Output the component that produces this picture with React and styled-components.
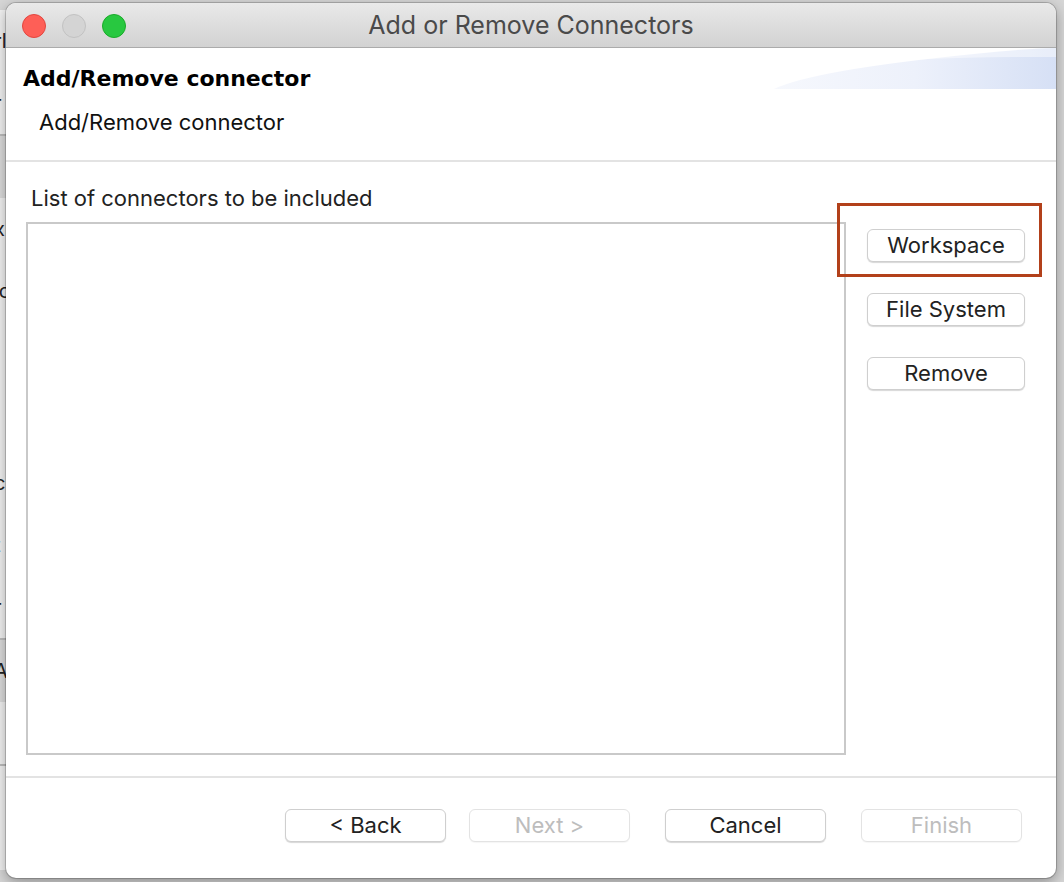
import styled, { createGlobalStyle } from "styled-components";

const GlobalStyle = createGlobalStyle`
  html, body {
    margin: 0;
    padding: 0;
    background: #d9d9d9;
  }
  body {
    font-family: Inter, "Liberation Sans", Arial, sans-serif;
    overflow: hidden;
  }
`;

function TrafficLights() {
  return (
    <Lights>
      <Light color="#fe5f57" border="#e2463f" />
      <Light color="#d4d4d4" border="#c2c2c2" />
      <Light color="#28c840" border="#1aab29" />
    </Lights>
  );
}

function Banner() {
  return (
    <BannerArt width="282" height="41" viewBox="0 0 282 41">
      <defs>
        <linearGradient id="bannerFill" x1="0" y1="0" x2="1" y2="0">
          <stop offset="0" stopColor="#f6f8fd" />
          <stop offset="0.5" stopColor="#edf1fb" />
          <stop offset="1" stopColor="#d6e0f5" />
        </linearGradient>
      </defs>
      <path d="M0 41 Q 40 22 200 6 Q 245 1 282 0 L 282 41 Z" fill="url(#bannerFill)" />
      <path d="M60 18 Q 150 8 282 9 L 282 0 Q 150 2 60 18 Z" fill="#ffffff" opacity="0.45" />
    </BannerArt>
  );
}

function App() {
  return (
    <>
      <GlobalStyle />
      <Desktop>
        <BackWindow>
          <BackRow>rl</BackRow>
          <BackRow line>r</BackRow>
          <BackRow shaded />
          <BackRow>xl</BackRow>
          <BackRow>ic</BackRow>
          <BackRow tall />
          <BackRow>c</BackRow>
          <BackRow>t</BackRow>
          <BackRow line>r</BackRow>
          <BackRow shaded>A</BackRow>
          <BackRow line />
          <BackRow />
        </BackWindow>

        <Dialog>
          <TitleBar>
            <TrafficLights />
            <WindowTitle>Add or Remove Connectors</WindowTitle>
          </TitleBar>

          <Header>
            <Banner />
            <HeaderTitle>Add/Remove connector</HeaderTitle>
            <HeaderDesc>Add/Remove connector</HeaderDesc>
          </Header>

          <Body>
            <ListColumn>
              <Label>List of connectors to be included</Label>
              <ListBox />
            </ListColumn>
            <SideButtons>
              <Highlight>
                <PushButton>Workspace</PushButton>
              </Highlight>
              <PushButton>File System</PushButton>
              <PushButton>Remove</PushButton>
            </SideButtons>
          </Body>

          <Footer>
            <PushButton wide>&lt; Back</PushButton>
            <PushButton wide disabled>Next &gt;</PushButton>
            <PushButton wide spaced>Cancel</PushButton>
            <PushButton wide spaced disabled>Finish</PushButton>
          </Footer>
        </Dialog>
      </Desktop>
    </>
  );
}

const Desktop = styled.div`
  position: relative;
  width: 1064px;
  height: 882px;
  overflow: hidden;
  background: #d6d6d6;
`;

const BackWindow = styled.div`
  position: absolute;
  left: 0;
  top: 10px;
  width: 40px;
  height: 860px;
  background: #f2f2f2;
  display: flex;
  flex-direction: column;
  font-size: 20px;
  color: #222;
`;

const BackRow = styled.div`
  height: ${(p) => (p.tall ? 130 : 62)}px;
  line-height: 62px;
  margin-left: -6px;
  border-bottom: ${(p) => (p.line ? "2px solid #bdbdbd" : "none")};
  background: ${(p) => (p.shaded ? "#dcdcdc" : "transparent")};
  white-space: nowrap;
`;

const Dialog = styled.div`
  position: absolute;
  left: 6px;
  top: 3px;
  width: 1050px;
  height: 875px;
  background: #fff;
  border-radius: 10px;
  overflow: hidden;
  box-shadow: 0 0 0 1px rgba(0, 0, 0, 0.18), 0 4px 14px rgba(0, 0, 0, 0.35);
  display: flex;
  flex-direction: column;
`;

const TitleBar = styled.div`
  position: relative;
  height: 44px;
  flex: 0 0 44px;
  background: linear-gradient(#e9e9e9, #d2d2d2);
  border-bottom: 1px solid #ababab;
  display: flex;
  align-items: center;
  justify-content: center;
`;

const Lights = styled.div`
  position: absolute;
  left: 16px;
  top: 11px;
  display: flex;
  gap: 16px;
`;

const Light = styled.span`
  width: 24px;
  height: 24px;
  border-radius: 50%;
  box-sizing: border-box;
  background: ${(p) => p.color};
  border: 1px solid ${(p) => p.border};
`;

const WindowTitle = styled.div`
  font-size: 25px;
  color: #4a4a4a;
`;

const Header = styled.div`
  position: relative;
  height: 114px;
  flex: 0 0 114px;
  border-bottom: 2px solid #e3e3e3;
  padding: 18px 0 0 17px;
  box-sizing: border-box;
`;

const BannerArt = styled.svg`
  position: absolute;
  right: 0;
  top: 0;
  display: block;
`;

const HeaderTitle = styled.div`
  position: relative;
  font-family: "DejaVu Sans", Verdana, sans-serif;
  font-weight: bold;
  font-size: 22px;
  line-height: 26px;
  color: #000;
`;

const HeaderDesc = styled.div`
  position: relative;
  margin: 17px 0 0 16px;
  font-size: 22px;
  line-height: 26px;
  color: #111;
`;

const Body = styled.div`
  flex: 1;
  display: flex;
  padding: 0 0 0 20px;
  border-bottom: 2px solid #e3e3e3;
`;

const ListColumn = styled.div`
  display: flex;
  flex-direction: column;
  width: 820px;
`;

const Label = styled.div`
  margin: 24px 0 0 5px;
  height: 24px;
  line-height: 24px;
  font-size: 22px;
  color: #222;
`;

const ListBox = styled.div`
  margin-top: 12px;
  height: 533px;
  box-sizing: border-box;
  border: 2px solid #c9c9c9;
  background: #fff;
`;

const SideButtons = styled.div`
  display: flex;
  flex-direction: column;
  gap: 31px;
  padding-top: 67px;
  margin-left: 21px;
`;

const Highlight = styled.div`
  width: 205px;
  height: 74px;
  box-sizing: border-box;
  border: 3px solid #b2401a;
  margin: -26px 0 -15px -30px;
  padding: 23px 0 0 27px;
`;

const PushButton = styled.button`
  width: ${(p) => (p.wide ? 161 : 158)}px;
  height: 33px;
  box-sizing: border-box;
  border: 1px solid ${(p) => (p.disabled ? "#e3e3e3" : "#cfcfcf")};
  border-radius: 6px;
  background: #fff;
  box-shadow: ${(p) => (p.disabled ? "0 1px 1px rgba(0,0,0,0.04)" : "0 1px 1px rgba(0,0,0,0.16)")};
  font-family: Inter, "Liberation Sans", Arial, sans-serif;
  font-size: 22px;
  color: ${(p) => (p.disabled ? "#bdbdbd" : "#222")};
  padding: 0;
  line-height: 31px;
  margin-left: ${(p) => (p.spaced ? "12px" : "0")};
`;

const Footer = styled.div`
  height: 100px;
  flex: 0 0 100px;
  display: flex;
  align-items: flex-start;
  padding: 31px 0 0 279px;
  box-sizing: border-box;
  gap: 23px;
`;

export default App;
